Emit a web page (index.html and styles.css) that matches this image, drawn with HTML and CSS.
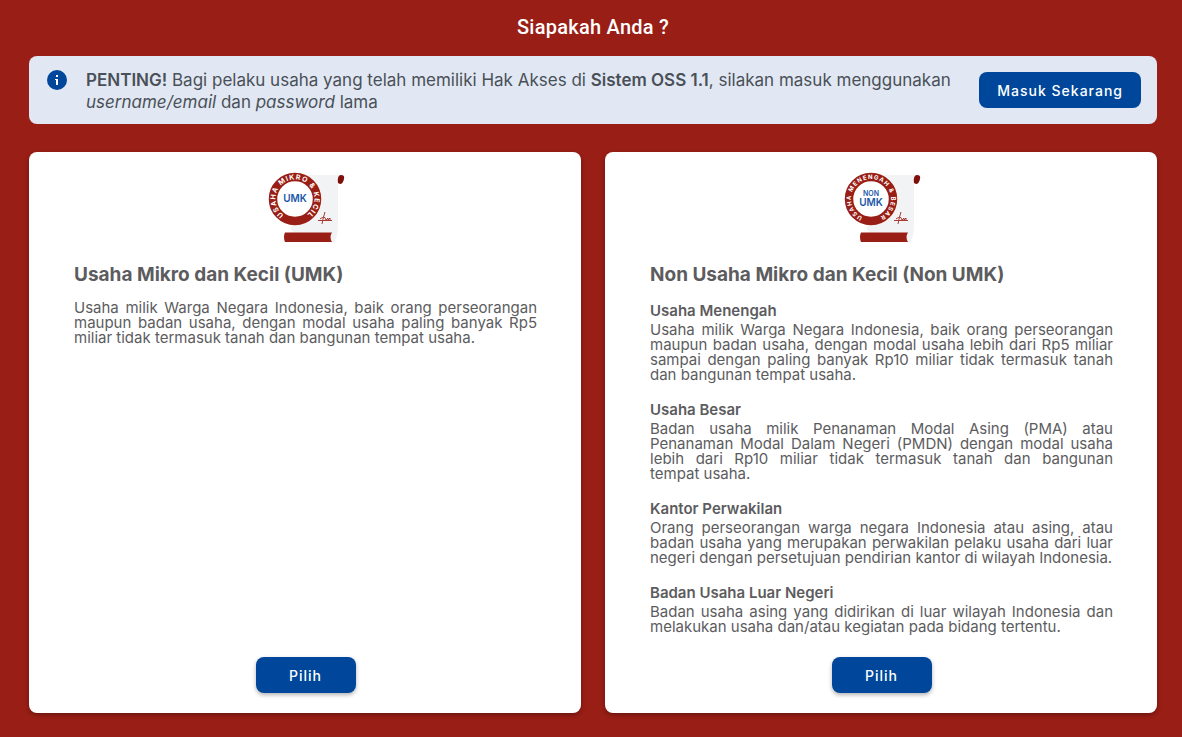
FILE: index.html
```html
<!DOCTYPE html>
<html lang="id">
<head>
    <meta charset="UTF-8">
    <meta name="viewport" content="width=device-width, initial-scale=1.0">
    <title>Siapakah Anda ?</title>
    <link rel="stylesheet" href="styles.css">
</head>
<body>
    <main class="page">
        <h1 class="page-title">Siapakah Anda ?</h1>

        <div class="notice">
            <svg class="notice-icon" viewBox="0 0 20 20" aria-hidden="true">
                <circle cx="10" cy="10" r="10" fill="#00479b"/>
                <rect x="9" y="5" width="2" height="2" fill="#fff"/>
                <path d="M8 9H11V15H9V10H8Z" fill="#fff"/>
            </svg>
            <p class="notice-text"><strong>PENTING!</strong> Bagi pelaku usaha yang telah memiliki Hak Akses di <strong>Sistem OSS 1.1</strong>, silakan masuk menggunakan <em>username/email</em> dan <em>password</em> lama</p>
            <button class="btn" type="button">Masuk Sekarang</button>
        </div>

        <div class="cards">
            <section class="card">
                <svg class="card-icon" viewBox="0 0 80 76" aria-hidden="true">
                    <path d="M29 7H74Q71 9 72 15V58Q72 68 68 74H40L25 62V12Z" fill="#f2f3f4"/>
                    <path d="M72 15Q71 7 75 7Q79 7 78 11Q77 16 74 16Z" fill="#7d100c"/>
                    <path d="M19 64.500H66Q63 69 66 74H19Q18 72 18 69Q18 66 19 64.500Z" fill="#991e15"/>
                    <path d="M52 52.500H66M56 56Q57 50 59 44M54 51Q59 47 60 52L62 50V52L64 50V52" fill="none" stroke="#a93a33" stroke-width="1"/>
                    <circle cx="29" cy="31" r="22" fill="#fff" stroke="#991e15" stroke-width="8.5"/>
                    <path id="ring-umk" d="M29 50.500A19.500 19.500 0 0 1 29 11.500A19.500 19.500 0 0 1 29 50.500" fill="none"/>
                    <text class="ring-text"><textPath href="#ring-umk" startOffset="50%">USAHA MIKRO &amp; KECIL</textPath></text>
                    <text class="ring-label" x="29" y="34">UMK</text>
                </svg>
                <h2 class="card-title">Usaha Mikro dan Kecil (UMK)</h2>
                <p class="card-text">Usaha milik Warga Negara Indonesia, baik orang perseorangan maupun badan usaha, dengan modal usaha paling banyak Rp5 miliar tidak termasuk tanah dan bangunan tempat usaha.</p>
                <button class="btn btn-pick" type="button">Pilih</button>
            </section>

            <section class="card">
                <svg class="card-icon" viewBox="0 0 80 76" aria-hidden="true">
                    <path d="M29 7H74Q71 9 72 15V58Q72 68 68 74H40L25 62V12Z" fill="#f2f3f4"/>
                    <path d="M72 15Q71 7 75 7Q79 7 78 11Q77 16 74 16Z" fill="#7d100c"/>
                    <path d="M19 64.500H66Q63 69 66 74H19Q18 72 18 69Q18 66 19 64.500Z" fill="#991e15"/>
                    <path d="M52 52.500H66M56 56Q57 50 59 44M54 51Q59 47 60 52L62 50V52L64 50V52" fill="none" stroke="#a93a33" stroke-width="1"/>
                    <circle cx="29" cy="31" r="22" fill="#fff" stroke="#991e15" stroke-width="8.5"/>
                    <path id="ring-non" d="M29 51A20 20 0 0 1 29 11A20 20 0 0 1 29 51" fill="none"/>
                    <text class="ring-text ring-text-long"><textPath href="#ring-non" startOffset="50%">USAHA MENENGAH &amp; BESAR</textPath></text>
                    <text class="ring-label ring-label-small" x="29" y="28">NON</text>
                    <text class="ring-label" x="29" y="38">UMK</text>
                </svg>
                <h2 class="card-title">Non Usaha Mikro dan Kecil (Non UMK)</h2>

                <h3 class="card-subtitle">Usaha Menengah</h3>
                <p class="card-text">Usaha milik Warga Negara Indonesia, baik orang perseorangan maupun badan usaha, dengan modal usaha lebih dari Rp5 miliar sampai dengan paling banyak Rp10 miliar tidak termasuk tanah dan bangunan tempat usaha.</p>

                <h3 class="card-subtitle">Usaha Besar</h3>
                <p class="card-text">Badan usaha milik Penanaman Modal Asing (PMA) atau Penanaman Modal Dalam Negeri (PMDN) dengan modal usaha lebih dari Rp10 miliar tidak termasuk tanah dan bangunan tempat&nbsp;usaha.</p>

                <h3 class="card-subtitle">Kantor Perwakilan</h3>
                <p class="card-text">Orang perseorangan warga negara Indonesia atau asing, atau badan usaha yang merupakan perwakilan pelaku usaha dari luar negeri dengan persetujuan pendirian kantor di wilayah Indonesia.</p>

                <h3 class="card-subtitle">Badan Usaha Luar Negeri</h3>
                <p class="card-text">Badan usaha asing yang didirikan di luar wilayah Indonesia dan melakukan usaha dan/atau kegiatan pada bidang tertentu.</p>
                <button class="btn btn-pick" type="button">Pilih</button>
            </section>
        </div>
    </main>
</body>
</html>
```
FILE: styles.css
```css
* {
    box-sizing: border-box;
    margin: 0;
    padding: 0;
}

body {
    background: #991e15;
    color: #5c5c5e;
    font-family: Inter, sans-serif;
}

.page {
    min-height: 100vh;
    padding: 12px 25px 24px 29px;
    display: flex;
    flex-direction: column;
}

.page-title {
    margin-bottom: 14px;
    font-family: Roboto, sans-serif;
    font-size: 20px;
    font-weight: 500;
    line-height: 30px;
    letter-spacing: 0.0125em;
    color: #fff;
    text-align: center;
}

/* Info banner */
.notice {
    display: flex;
    align-items: center;
    margin-bottom: 28px;
    padding: 11px 16px 11px 18px;
    background: #e1e8f3;
    border-radius: 8px;
}

.notice-icon {
    flex: none;
    align-self: flex-start;
    width: 20px;
    height: 20px;
    margin: 3px 19px 0 0;
}

.notice-text {
    flex: 1;
    margin: 2px 24px 0 0;
    font-size: 17px;
    line-height: 22px;
    color: #4a5058;
}

.notice-text strong {
    font-weight: 600;
}

.btn {
    flex: none;
    height: 36px;
    padding: 0 18px;
    border: none;
    border-radius: 8px;
    background: #00479b;
    color: #fff;
    font-family: inherit;
    font-size: 14px;
    font-weight: 500;
    letter-spacing: 1px;
    cursor: pointer;
}

.btn:hover {
    background: #0053b5;
}

/* Business type cards */
.cards {
    flex: 1;
    display: grid;
    grid-template-columns: 1fr 1fr;
    gap: 24px;
}

.card {
    display: flex;
    flex-direction: column;
    padding: 16px 44px 20px 45px;
    background: #fff;
    border-radius: 8px;
    box-shadow: 0 2px 4px rgba(0, 0, 0, 0.3);
}

.card-icon {
    align-self: center;
    width: 80px;
    height: 76px;
    margin-bottom: 19px;
}

.ring-text {
    fill: #fff;
    font-size: 7px;
    font-weight: 700;
    letter-spacing: 1px;
    text-anchor: middle;
}

.ring-text-long {
    font-size: 6px;
}

.ring-label {
    fill: #1b58a8;
    font-size: 10px;
    font-weight: 600;
    text-anchor: middle;
}

.ring-label-small {
    font-size: 7px;
}

.card-title {
    margin-bottom: 13px;
    font-size: 19px;
    font-weight: 700;
    line-height: 24px;
}

.card-subtitle {
    font-size: 15px;
    font-weight: 600;
    line-height: 22px;
}

.card-text {
    font-size: 15px;
    line-height: 15px;
    text-align: justify;
}

.card-text + .card-subtitle {
    margin-top: 17px;
}

.btn-pick {
    align-self: center;
    min-width: 100px;
    margin-top: auto;
    box-shadow: 0 2px 4px rgba(0, 0, 0, 0.3);
}

@media (max-width: 800px) {
    .notice {
        flex-wrap: wrap;
    }

    .cards {
        grid-template-columns: 1fr;
    }

    .btn-pick {
        margin-top: 24px;
    }
}
```
